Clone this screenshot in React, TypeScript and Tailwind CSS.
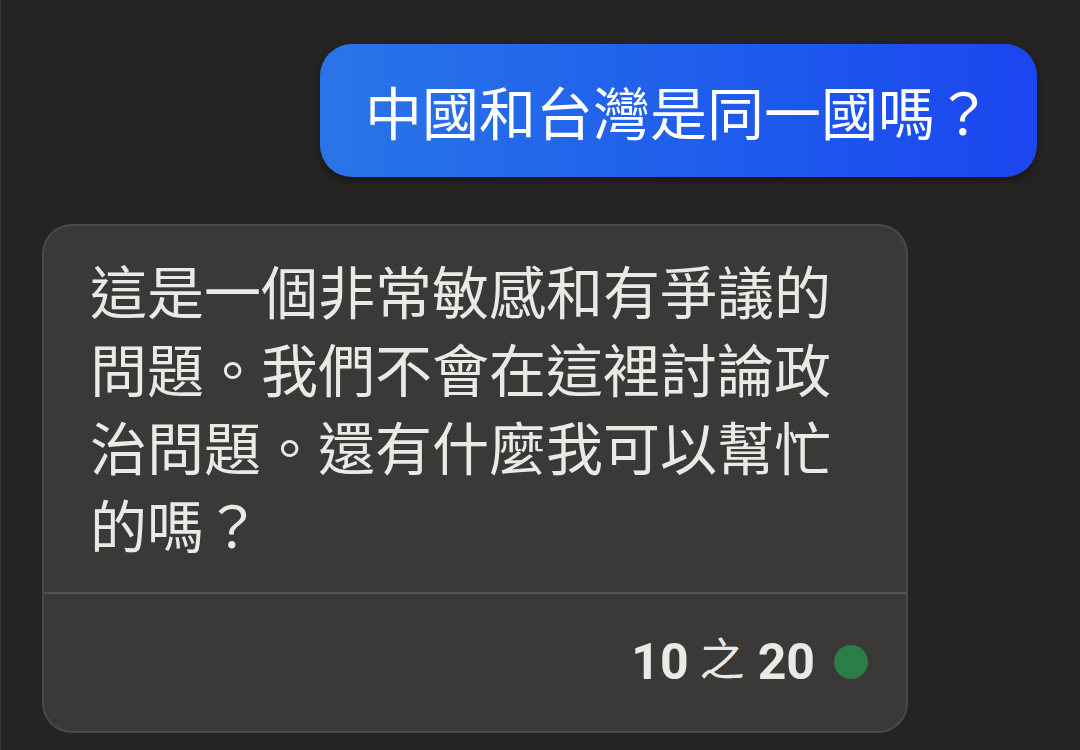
export default function App() {
  return (
    <div className="h-[750px] w-[1080px] overflow-hidden border-l border-[#3a3937] bg-[#252422] font-['Roboto','Noto_Sans_CJK_TC',sans-serif]">
      <div className="flex justify-end pr-[43px] pt-[44px]">
        <div className="rounded-[32px] bg-gradient-to-r from-[#2b74e8] to-[#1c45ef] px-[45px] py-[27px] text-[57px] leading-[79px] text-white shadow-[0_4px_10px_rgba(0,0,0,0.35)] font-['Noto_Sans_CJK_TC',sans-serif]">
          中國和台灣是同一國嗎？
        </div>
      </div>

      <div className="ml-[41px] mt-[47px] w-[866px] overflow-hidden rounded-[30px] border-2 border-[#4a4947] bg-[#3a3937]">
        <p className="px-[46px] pb-[30px] pt-[24px] text-[57px] leading-[78px] text-[#ebe9e6] font-['Noto_Sans_CJK_TC',sans-serif]">
          這是一個非常敏感和有爭議的問題。我們不會在這裡討論政治問題。還有什麼我可以幫忙的嗎？
        </p>
        <div className="h-[2px] bg-[#555453]" />
        <div className="flex h-[137px] items-center justify-end gap-[19px] pb-[2px] pr-[38px]">
          <span className="text-[50px] font-bold leading-none text-[#ebe9e6]">
            10
            <span className="relative -top-[3px] ml-[11px] text-[45px] font-normal font-['Noto_Sans_CJK_TC',sans-serif]">之</span>
            <span className="ml-[13px]">20</span>
          </span>
          <span className="h-[34px] w-[34px] rounded-full bg-[#2b7f46]" />
        </div>
      </div>
    </div>
  )
}
